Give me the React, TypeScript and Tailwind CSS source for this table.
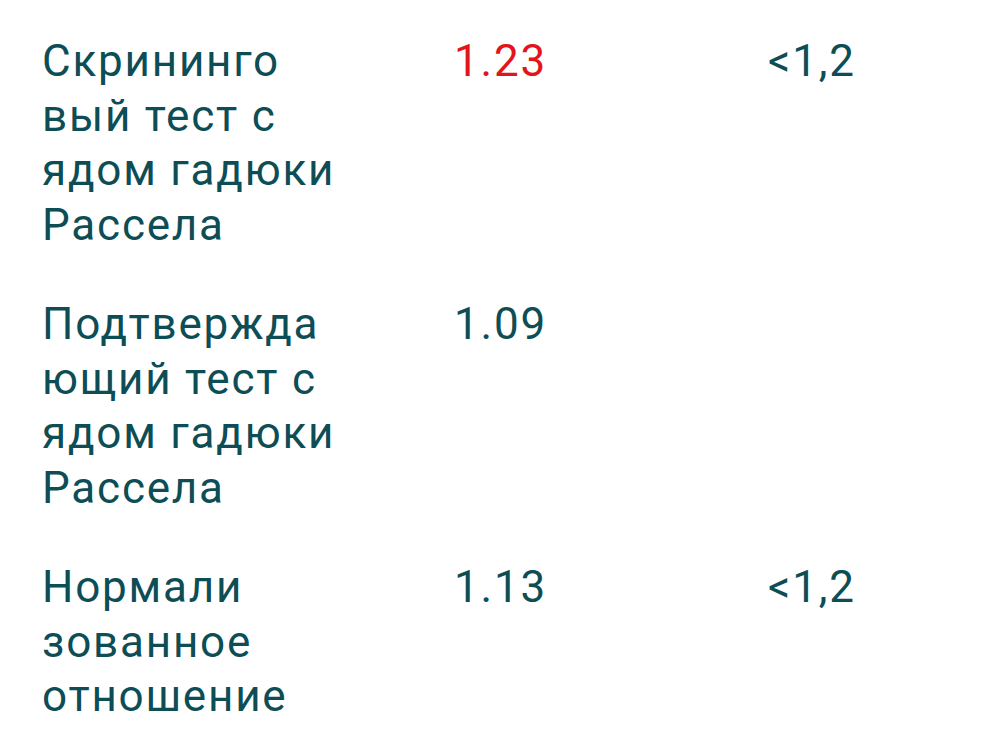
import React from 'react';

interface IResultRow {
  name: string[];
  value: string;
  isAbnormal?: boolean;
  reference?: string;
}

const rows: IResultRow[] = [
  {
    name: ['Скрининго', 'вый тест с', 'ядом гадюки', 'Рассела'],
    value: '1.23',
    isAbnormal: true,
    reference: '<1,2',
  },
  {
    name: ['Подтвержда', 'ющий тест с', 'ядом гадюки', 'Рассела'],
    value: '1.09',
  },
  {
    name: ['Нормали', 'зованное', 'отношение'],
    value: '1.13',
    reference: '<1,2',
  },
];

const ResultRow = ({ name, value, isAbnormal, reference }: IResultRow) => (
  <div className="grid grid-cols-[412px_314px_1fr]">
    <div>
      {name.map((line) => (
        <div key={line}>{line}</div>
      ))}
    </div>
    <div className={isAbnormal ? 'text-[#e3151b]' : ''}>{value}</div>
    <div>{reference}</div>
  </div>
);

export default function App() {
  return (
    <div
      className="flex h-[744px] w-[1000px] flex-col gap-[45px] overflow-hidden bg-white pl-[42px] pt-[34px] text-[44px] leading-[54.5px] tracking-[1.8px] text-[#0d4d55]"
      style={{ fontFamily: 'Roboto, "Noto Sans", sans-serif' }}
    >
      {rows.map((row) => (
        <ResultRow key={row.name.join(' ')} {...row} />
      ))}
    </div>
  );
}
